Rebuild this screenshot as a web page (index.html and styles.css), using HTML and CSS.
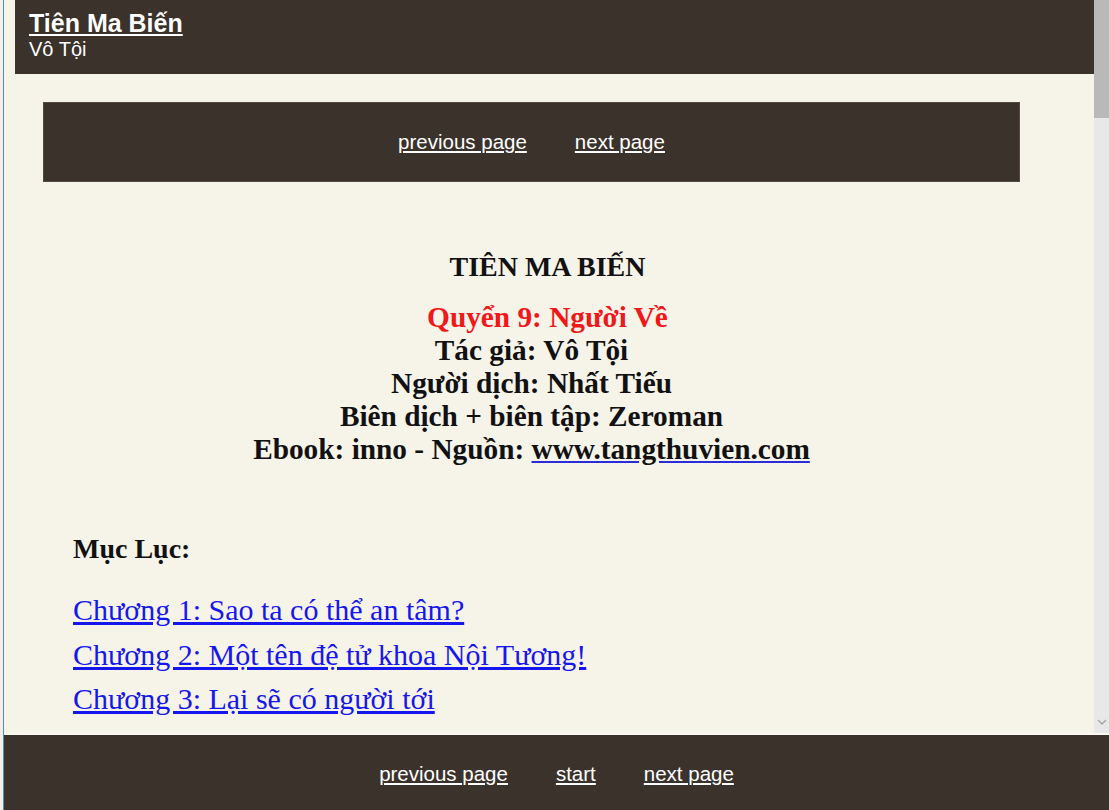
FILE: index.html
```html
<!DOCTYPE html>
<html>
<head>
  <meta charset="UTF-8">
  <title>Tiên Ma Biến - Quyển 9</title>
  <link rel="stylesheet" href="styles.css">
</head>
<body>
<div class="frame">
  <div class="reader">
    <div class="view">
      <div class="topbar">
        <a class="book-link" href="javascript:;">Tiên Ma Biến</a>
        <div class="author">Vô Tội</div>
      </div>
      <div class="pager">
        <a href="javascript:;">previous page</a>
        <a href="javascript:;">next page</a>
      </div>
      <div class="book">
        <h1 class="book-title shift">TIÊN MA BIẾN</h1>
        <div class="info">
          <div class="volume shift">Quyển 9: Người Về</div>
          <div>Tác giả: Vô Tội</div>
          <div>Người dịch: Nhất Tiếu</div>
          <div>Biên dịch + biên tập: Zeroman</div>
          <div>Ebook: inno - Nguồn: <a class="source" href="javascript:;">www.tangthuvien.com</a></div>
        </div>
        <div class="toc">
          <h2>Mục Lục:</h2>
          <ul>
            <li><a href="javascript:;">Chương 1: Sao ta có thể an tâm?</a></li>
            <li><a href="javascript:;">Chương 2: Một tên đệ tử khoa Nội Tương!</a></li>
            <li><a href="javascript:;">Chương 3: Lại sẽ có người tới</a></li>
          </ul>
        </div>
      </div>
    </div>
    <!-- thanh cuộn -->
    <div class="scrollbar">
      <div class="thumb"></div>
      <svg class="scroll-arrow" width="10" height="6" viewBox="0 0 10 6">
        <path d="M1 1 L5 5 L9 1" fill="none" stroke="#a3a3a3" stroke-width="1.3"/>
      </svg>
    </div>
  </div>
  <div class="footer">
    <a href="javascript:;">previous page</a>
    <a href="javascript:;">start</a>
    <a href="javascript:;">next page</a>
  </div>
</div>
</body>
</html>
```

FILE: styles.css
```css
* {
  margin: 0;
  padding: 0;
}
html, body {
  height: 100%;
  overflow: hidden;
}
body {
  background: #f1f0ea;
  font-family: "Liberation Sans", Arial, sans-serif;
}
.frame {
  margin-left: 3px;
  border-left: 1px solid #4a90d8;
  height: 810px;
  display: flex;
  flex-direction: column;
  background: #f6f3e9;
}
.reader {
  height: 733px;
  flex: none;
  display: flex;
}
.view {
  flex: 1;
  overflow: hidden;
}
.scrollbar {
  width: 15px;
  background: #e8e8e8;
  display: flex;
  flex-direction: column;
  align-items: center;
}
.thumb {
  width: 100%;
  height: 118px;
  background: #b9b9b9;
}
.scroll-arrow {
  margin-top: auto;
  margin-bottom: 8px;
}

/* thanh tiêu đề */
.topbar {
  margin-left: 11px;
  height: 74px;
  padding: 9px 14px 0;
  box-sizing: border-box;
  background: #3b322c;
  color: #fff;
}
.book-link {
  color: #fff;
  font-size: 25px;
  font-weight: bold;
}
.author {
  font-size: 20px;
}

/* phân trang */
.pager {
  margin: 28px 0 0 39px;
  width: 977px;
  height: 80px;
  box-sizing: border-box;
  border: 1px solid #544a41;
  background: #3b322c;
  display: flex;
  justify-content: center;
  align-items: center;
  gap: 48px;
}
.pager a, .footer a {
  color: #fff;
  font-size: 20.5px;
}

/* nội dung */
.book {
  margin-left: 39px;
  width: 977px;
  font-family: "Liberation Serif", "Times New Roman", serif;
  color: #111;
}
.book-title {
  margin-top: 68px;
  font-size: 28px;
  line-height: 33px;
  text-align: center;
}
.shift {
  padding-left: 32px;
}
.info {
  margin-top: 18px;
  font-size: 29.3px;
  line-height: 33px;
  font-weight: bold;
  text-align: center;
}
.volume {
  color: #f01818;
}
.source {
  color: #111;
  text-decoration-color: #2b2bd8;
}
.toc {
  margin-top: 66px;
  padding-left: 30px;
}
.toc h2 {
  font-size: 28px;
  line-height: 33px;
}
.toc ul {
  margin-top: 23px;
  list-style: none;
}
.toc li {
  font-size: 30px;
  line-height: 44.5px;
}
.toc a {
  color: #1616ee;
}

/* chân trang */
.footer {
  flex: 1;
  border-top: 2px solid #fbf9f2;
  background: #3b322c;
  display: flex;
  justify-content: center;
  align-items: flex-start;
  padding-top: 27px;
  gap: 48px;
}
```
